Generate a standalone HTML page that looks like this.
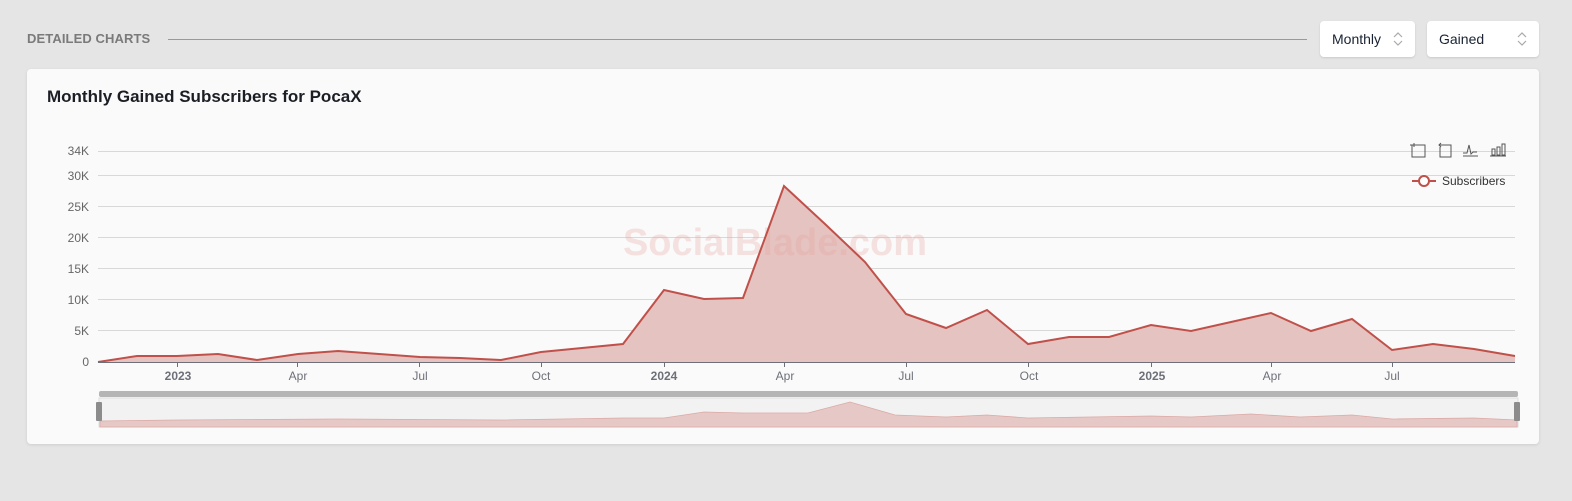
<!DOCTYPE html>
<html><head><meta charset="utf-8"><style>
*{margin:0;padding:0;box-sizing:border-box}
body{width:1572px;height:501px;background:#e5e5e5;font-family:"Liberation Sans",sans-serif;position:relative;overflow:hidden}
.hd{position:absolute;left:27px;top:31px;font-size:13px;font-weight:bold;color:#7a7a7a;letter-spacing:.1px}
.line{position:absolute;left:168px;top:39px;width:1139px;height:1px;background:#999}
.sel{position:absolute;top:21px;height:36px;background:#fff;border-radius:4px;box-shadow:0 1px 2px rgba(0,0,0,.12);font-size:14px;color:#1a2333;padding:10px 12px}
.sel svg{position:absolute;right:12px;top:11px}
.card{position:absolute;left:27px;top:69px;width:1512px;height:375px;background:#fafafa;border-radius:4px;box-shadow:0 1px 3px rgba(0,0,0,.1)}
.ttl{position:absolute;left:47px;top:87px;font-size:17px;font-weight:bold;color:#1b1e24}
svg.c{position:absolute;left:0;top:0}
</style></head><body>
<div class="hd">DETAILED CHARTS</div><div class="line"></div>
<div class="sel" style="left:1320px;width:95px">Monthly<svg width="10" height="14" viewBox="0 0 10 14"><path d="M1 5l4-4 4 4M1 9l4 4 4-4" fill="none" stroke="#aaa" stroke-width="1.2"/></svg></div>
<div class="sel" style="left:1427px;width:112px">Gained<svg width="10" height="14" viewBox="0 0 10 14"><path d="M1 5l4-4 4 4M1 9l4 4 4-4" fill="none" stroke="#aaa" stroke-width="1.2"/></svg></div>
<div class="card"></div>
<div class="ttl">Monthly Gained Subscribers for PocaX</div>
<svg class="c" width="1572" height="501" font-family="Liberation Sans, sans-serif">
<g stroke="#d8d8d8" stroke-width="1">
<line x1="98" y1="151.5" x2="1515" y2="151.5"/><line x1="98" y1="175.5" x2="1515" y2="175.5"/><line x1="98" y1="206.5" x2="1515" y2="206.5"/><line x1="98" y1="237.5" x2="1515" y2="237.5"/><line x1="98" y1="268.5" x2="1515" y2="268.5"/><line x1="98" y1="299.5" x2="1515" y2="299.5"/><line x1="98" y1="330.5" x2="1515" y2="330.5"/>
</g>
<g font-size="12" fill="#666" text-anchor="end">
<text x="89" y="155">34K</text><text x="89" y="180">30K</text><text x="89" y="211">25K</text><text x="89" y="242">20K</text><text x="89" y="273">15K</text><text x="89" y="304">10K</text><text x="89" y="335">5K</text><text x="89" y="366">0</text>
</g>
<path d="M98,362 L137,356 177,356 218,354 257,360 298,354 338,351 379,354 420,357 460,358 501,360 541,352 582,348 623,344 664,290 704,299 743,298 784,186 825,224 865,262 906,314 946,328 987,310 1028,344 1069,337 1109,337 1151,325 1191,331 1231,322 1271,313 1311,331 1352,319 1392,350 1433,344 1474,349 1515,356 L1515,362Z" fill="#e5c3c0"/>
<text x="775" y="255" font-size="38" font-weight="bold" fill="#e8a8a2" opacity=".3" text-anchor="middle">SocialBlade.com</text>
<path d="M98,362 L137,356 177,356 218,354 257,360 298,354 338,351 379,354 420,357 460,358 501,360 541,352 582,348 623,344 664,290 704,299 743,298 784,186 825,224 865,262 906,314 946,328 987,310 1028,344 1069,337 1109,337 1151,325 1191,331 1231,322 1271,313 1311,331 1352,319 1392,350 1433,344 1474,349 1515,356" fill="none" stroke="#c0504a" stroke-width="2"/>
<line x1="98" y1="362.5" x2="1515" y2="362.5" stroke="#6e7079"/>
<g stroke="#6e7079"><line x1="177.5" y1="362" x2="177.5" y2="367"/><line x1="297.5" y1="362" x2="297.5" y2="367"/><line x1="419.5" y1="362" x2="419.5" y2="367"/><line x1="541.5" y1="362" x2="541.5" y2="367"/><line x1="664.5" y1="362" x2="664.5" y2="367"/><line x1="784.5" y1="362" x2="784.5" y2="367"/><line x1="906.5" y1="362" x2="906.5" y2="367"/><line x1="1028.5" y1="362" x2="1028.5" y2="367"/><line x1="1151.5" y1="362" x2="1151.5" y2="367"/><line x1="1271.5" y1="362" x2="1271.5" y2="367"/><line x1="1392.5" y1="362" x2="1392.5" y2="367"/></g>
<g font-size="12" fill="#6e7079" text-anchor="middle">
<text x="178" y="380" font-weight="bold">2023</text><text x="298" y="380">Apr</text><text x="420" y="380">Jul</text><text x="541" y="380">Oct</text><text x="664" y="380" font-weight="bold">2024</text><text x="785" y="380">Apr</text><text x="906" y="380">Jul</text><text x="1029" y="380">Oct</text><text x="1152" y="380" font-weight="bold">2025</text><text x="1272" y="380">Apr</text><text x="1392" y="380">Jul</text>
</g>
<rect x="99" y="391" width="1419" height="6" rx="2" fill="#b5b5b5"/>
<rect x="99" y="398" width="1419" height="29" fill="#f2f2f2" stroke="#ddd"/>
<path d="M100,421 L177,420 338,419 501,420 623,418 664,418 704,412 743,413 808,413 850,402 895,415 946,417 987,415 1028,418 1151,416 1191,417 1251,414 1300,417 1352,415 1392,419 1474,418 1517,420 L1517,427 L100,427Z" fill="#e6c9c6" stroke="#dba9a5" stroke-width=".8"/>
<rect x="96" y="402" width="6" height="19" rx="1" fill="#8c8c8c"/><rect x="1514" y="402" width="6" height="19" rx="1" fill="#8c8c8c"/>
<g stroke="#555" fill="none" stroke-width="1">
<path d="M1412,145v12h13v-12h-13M1410,145h4M1414,143v4"/>
<path d="M1439,145h12v12h-11v-10M1441,143l-2,2 2,2"/>
<path d="M1463,156h15M1463,153h4l2,-8 2,9 2,-2h4"/>
<path d="M1490,156h16M1492,155v-6h3v6zM1497,155v-8h3v8zM1502,155v-11h3v11z"/>
</g>
<line x1="1412" y1="181" x2="1436" y2="181" stroke="#c0504a" stroke-width="2"/><circle cx="1424" cy="181" r="5" fill="#fff" stroke="#c0504a" stroke-width="2"/>
<text x="1442" y="185" font-size="12" fill="#333">Subscribers</text>
</svg>
</body></html>
